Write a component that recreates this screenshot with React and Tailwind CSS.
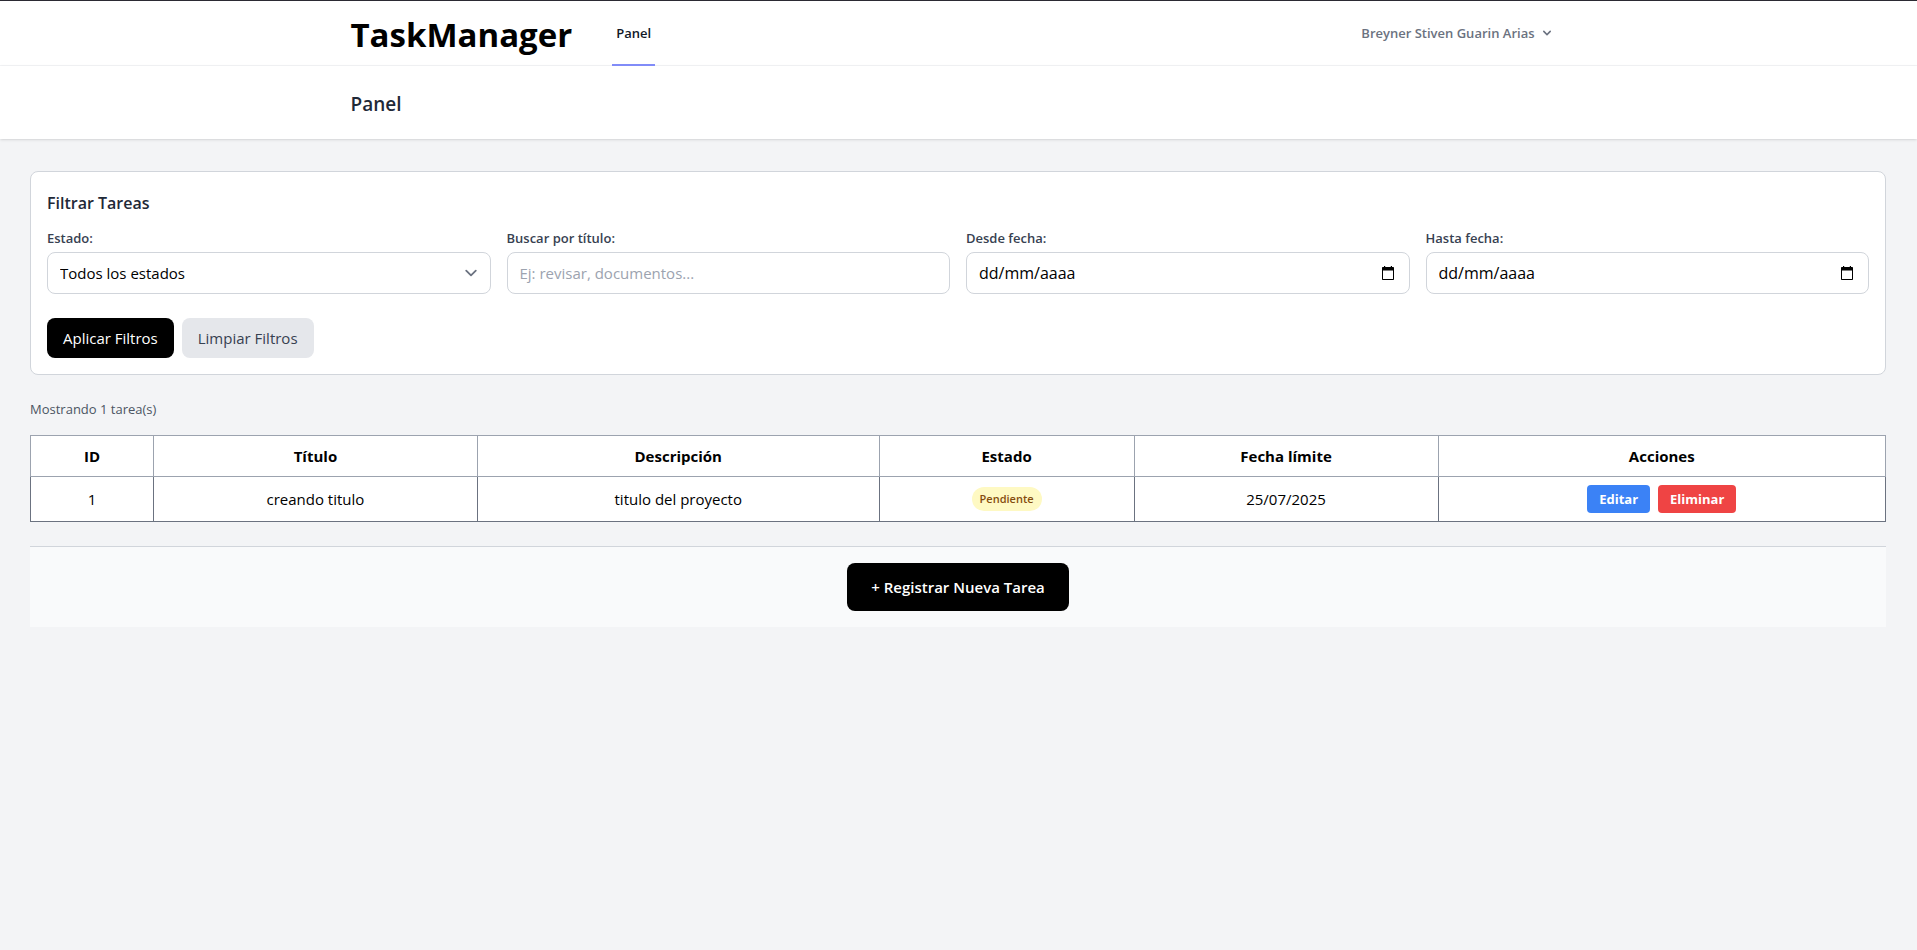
import React from "react";

const tasks = [
  {
    id: 1,
    title: "creando titulo",
    description: "titulo del proyecto",
    status: "Pendiente",
    due: "25/07/2025",
  },
];

const labelClass = "mb-1 block text-[13px] leading-5 font-semibold text-[#374151]";
const fieldClass =
  "block h-[42px] w-full rounded-lg border border-[#d1d5db] bg-white px-3 leading-6 text-black";
const thClass = "border border-[#9ca3af] px-4 py-2 text-[15px] leading-6 font-bold";
const tdClass = "border border-[#6b7280] px-4 py-2 text-[15px] leading-6";

function CalendarIcon() {
  return (
    <svg className="h-[14px] w-3" viewBox="0 0 12 14" aria-hidden="true">
      <path
        fill="#000"
        d="M2 0h1.200v1h5.600V0H10v1h1c.6 0 1 .4 1 1v11c0 .6-.4 1-1 1H1c-.6 0-1-.4-1-1V2c0-.6.4-1 1-1h1V0ZM1 4.500V13h10V4.500H1Z"
      />
    </svg>
  );
}

function DateField({ id, label }) {
  return (
    <div>
      <label htmlFor={id} className={labelClass}>
        {label}
      </label>
      <div className="relative">
        <input id={id} type="text" placeholder="dd/mm/aaaa" className={`${fieldClass} text-base placeholder:text-black`} />
        <button type="button" aria-label="Abrir calendario" className="absolute inset-y-0 right-4 flex items-center">
          <CalendarIcon />
        </button>
      </div>
    </div>
  );
}

export default function App() {
  return (
    <div className="min-h-screen border-t border-[#2b2a33] bg-[#f3f4f6] font-['Open_Sans','Noto_Sans',sans-serif] text-black">
      <nav className="border-b border-[#f3f4f6] bg-white">
        <div className="mx-auto flex h-16 max-w-7xl justify-between px-8">
          <div className="flex gap-10">
            <a href="#" className="flex items-center pt-1 text-[33px] leading-10 font-bold">
              TaskManager
            </a>
            <a
              href="#"
              className="-mb-px flex items-center border-b-2 border-[#818cf8] px-1 text-[13px] leading-5 font-semibold text-[#111827]"
            >
              Panel
            </a>
          </div>
          <button type="button" className="flex items-center gap-1 px-3 text-[13px] leading-4 font-semibold text-[#6b7280]">
            Breyner Stiven Guarin Arias
            <svg className="h-4 w-4" viewBox="0 0 20 20" fill="currentColor" aria-hidden="true">
              <path
                fillRule="evenodd"
                clipRule="evenodd"
                d="M5.293 7.293a1 1 0 011.414 0L10 10.586l3.293-3.293a1 1 0 111.414 1.414l-4 4a1 1 0 01-1.414 0l-4-4a1 1 0 010-1.414z"
              />
            </svg>
          </button>
        </div>
      </nav>

      <header className="bg-white shadow-sm">
        <div className="mx-auto max-w-7xl px-8 pt-6 pb-5">
          <h2 className="text-[19px] leading-[29px] font-semibold text-[#1f2937]">Panel</h2>
        </div>
      </header>

      <main className="pt-8 pr-[31px] pl-[30px]">
        <form className="rounded-lg border border-[#d1d5db] bg-white p-4" onSubmit={(e) => e.preventDefault()}>
          <h3 className="mb-2.5 text-[16px] leading-[30px] font-semibold text-[#1f2937]">Filtrar Tareas</h3>
          <div className="grid grid-cols-1 gap-4 md:grid-cols-4">
            <div>
              <label htmlFor="estado" className={labelClass}>
                Estado:
              </label>
              <div className="relative">
                <select id="estado" className={`${fieldClass} appearance-none text-[15px]`}>
                  <option>Todos los estados</option>
                </select>
                <svg
                  className="pointer-events-none absolute inset-y-0 right-2 my-auto h-6 w-6"
                  viewBox="0 0 20 20"
                  fill="none"
                  aria-hidden="true"
                >
                  <path
                    d="M6 8l4 4 4-4"
                    stroke="#6b7280"
                    strokeWidth="1.5"
                    strokeLinecap="round"
                    strokeLinejoin="round"
                  />
                </svg>
              </div>
            </div>
            <div>
              <label htmlFor="titulo" className={labelClass}>
                Buscar por título:
              </label>
              <input
                id="titulo"
                type="text"
                placeholder="Ej: revisar, documentos..."
                className={`${fieldClass} text-[15px] placeholder:text-[#9ca3af]`}
              />
            </div>
            <DateField id="desde" label="Desde fecha:" />
            <DateField id="hasta" label="Hasta fecha:" />
          </div>
          <div className="mt-6 flex gap-2">
            <button type="submit" className="rounded-lg bg-black px-4 py-2 text-[15px] leading-6 text-white">
              Aplicar Filtros
            </button>
            <button type="reset" className="rounded-lg bg-[#e5e7eb] px-4 py-2 text-[15px] leading-6 text-[#374151]">
              Limpiar Filtros
            </button>
          </div>
        </form>

        <p className="mt-6 mb-4 text-[13px] leading-5 text-[#4b5563]">Mostrando {tasks.length} tarea(s)</p>

        <table className="w-full table-fixed border-collapse bg-white text-center">
          <colgroup>
            <col className="w-[6.63%]" />
            <col className="w-[17.46%]" />
            <col className="w-[21.66%]" />
            <col className="w-[13.74%]" />
            <col className="w-[16.39%]" />
            <col />
          </colgroup>
          <thead>
            <tr>
              <th className={thClass}>ID</th>
              <th className={thClass}>Título</th>
              <th className={thClass}>Descripción</th>
              <th className={thClass}>Estado</th>
              <th className={thClass}>Fecha límite</th>
              <th className={thClass}>Acciones</th>
            </tr>
          </thead>
          <tbody>
            {tasks.map((task) => (
              <tr key={task.id}>
                <td className={tdClass}>{task.id}</td>
                <td className={tdClass}>{task.title}</td>
                <td className={tdClass}>{task.description}</td>
                <td className={tdClass}>
                  <div className="flex justify-center">
                    <span className="rounded-full bg-[#fef9c3] px-2 py-1 text-[11px] leading-4 font-semibold text-[#854d0e]">
                      {task.status}
                    </span>
                  </div>
                </td>
                <td className={tdClass}>{task.due}</td>
                <td className={tdClass}>
                  <div className="flex justify-center gap-2">
                    <button type="button" className="rounded bg-[#3b82f6] px-3 py-1 text-[13px] leading-5 font-bold text-white">
                      Editar
                    </button>
                    <button type="button" className="rounded bg-[#ef4444] px-3 py-1 text-[13px] leading-5 font-bold text-white">
                      Eliminar
                    </button>
                  </div>
                </td>
              </tr>
            ))}
          </tbody>
        </table>

        <div className="mt-6 flex justify-center border-t border-[#d1d5db] bg-[#f9fafb] p-4">
          <button type="button" className="rounded-lg bg-black px-6 py-3 text-[15px] leading-6 font-semibold text-white">
            + Registrar Nueva Tarea
          </button>
        </div>
      </main>
    </div>
  );
}
